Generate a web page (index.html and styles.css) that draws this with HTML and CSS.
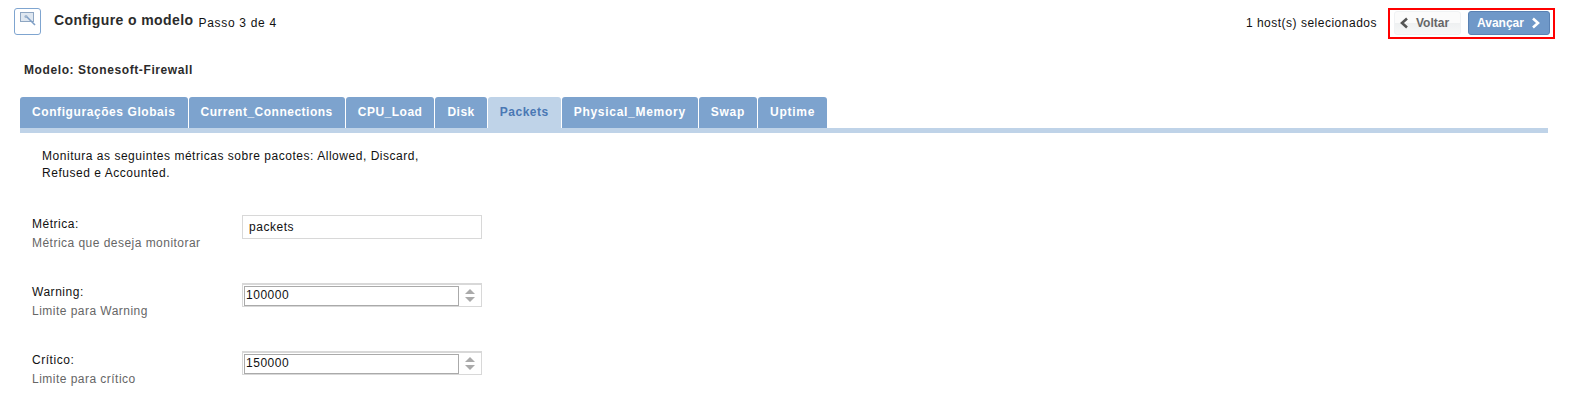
FILE: index.html
```html
<!DOCTYPE html>
<html lang="pt-BR">

<head>
  <meta charset="UTF-8">
  <meta name="viewport" content="width=device-width">
  <title>Configure o modelo</title>
  <link rel="stylesheet" href="styles.css">
</head>

<body>
  <div class="topbar">
    <div class="step-icon">
      <svg width="17" height="17" viewBox="0 0 17 17">
        <rect x="0.5" y="0.5" width="13" height="9" fill="#dfe7f0" stroke="#8ea6c2"></rect>
        <circle cx="6" cy="4.5" r="1.6" fill="#9db3cc"></circle>
        <path d="M7 5l8 8" stroke="#7f9fc6" stroke-width="1.6" fill="none"></path>
      </svg>
    </div>
    <h1 class="step-title">Configure o modelo</h1>
    <span class="step-count">Passo 3 de 4</span>
    <span class="hosts">1 host(s) selecionados</span>
    <div class="nav-box">
      <button class="btn btn-back">
        <svg width="10" height="12" viewBox="0 0 10 12"><path d="M8 1.5L3 6l5 4.5" fill="none" stroke="#555" stroke-width="2.6"></path></svg>
        Voltar
      </button>
      <button class="btn btn-next">
        Avançar
        <svg width="10" height="12" viewBox="0 0 10 12"><path d="M2 1.5L7 6l-5 4.5" fill="none" stroke="#fff" stroke-width="2.6"></path></svg>
      </button>
    </div>
  </div>

  <h2 class="model-name">Modelo: Stonesoft-Firewall</h2>

  <div class="tabs">
    <a class="tab">Configurações Globais</a>
    <a class="tab">Current_Connections</a>
    <a class="tab">CPU_Load</a>
    <a class="tab">Disk</a>
    <a class="tab active">Packets</a>
    <a class="tab">Physical_Memory</a>
    <a class="tab">Swap</a>
    <a class="tab">Uptime</a>
  </div>

  <p class="intro">Monitura as seguintes métricas sobre pacotes: Allowed, Discard, Refused e Accounted.</p>

  <div class="field">
    <div class="field-text">
      <label>Métrica:</label>
      <small>Métrica que deseja monitorar</small>
    </div>
    <input class="text-input" type="text" value="packets">
  </div>

  <div class="field">
    <div class="field-text">
      <label>Warning:</label>
      <small>Limite para Warning</small>
    </div>
    <div class="spinner">
      <input type="text" value="100000">
      <span class="arrows"><i class="up"></i><i class="down"></i></span>
    </div>
  </div>

  <div class="field">
    <div class="field-text">
      <label>Crítico:</label>
      <small>Limite para crítico</small>
    </div>
    <div class="spinner">
      <input type="text" value="150000">
      <span class="arrows"><i class="up"></i><i class="down"></i></span>
    </div>
  </div>
</body>

</html>
```

FILE: styles.css
```css
* {
  box-sizing: border-box;
  font-family: 'Liberation Sans', Arial, sans-serif;
}

html,
body {
  margin: 0;
  padding: 0;
  background-color: #fff;
  overflow: hidden;
}

body {
  height: 402px;
  font-size: 12px;
  letter-spacing: 0.53px;
  color: #111;
}

.topbar {
  display: flex;
  align-items: flex-start;
  height: 45px;
  padding: 8px 15px 0 14px;
}

.step-icon {
  width: 27px;
  height: 27px;
  border: 1px solid #7fa5d0;
  border-radius: 3px;
  padding: 3px 0 0 5px;
  margin-right: 13px;
}

.step-title {
  margin: 4px 5px 0 0;
  font-size: 14px;
  line-height: 16px;
  font-weight: bold;
  letter-spacing: 0.4px;
  color: #2b2b2b;
}

.step-count {
  margin-top: 7px;
  line-height: 16px;
  letter-spacing: 0.7px;
}

.hosts {
  margin: 7px 11px 0 auto;
  line-height: 16px;
  letter-spacing: 0.5px;
}

.nav-box {
  display: flex;
  gap: 7px;
  width: 167px;
  height: 31px;
  border: 2px solid #f00;
  padding: 1px 2px 0 4px;
}

.btn {
  display: flex;
  align-items: center;
  height: 24px;
  padding: 0 8px;
  border-radius: 3px;
  font-size: 12px;
  font-weight: bold;
  letter-spacing: 0;
}

.btn-back {
  width: 67px;
  gap: 7px;
  padding-left: 4px;
  border: 1px solid #f0f2f4;
  background: linear-gradient(#fbfbfb 50%, #eef0f1 50%, #f7f8f8);
  color: #666;
}

.btn-next {
  width: 82px;
  gap: 7px;
  border: 1px solid #5a82b4;
  background-color: #6f98c8;
  color: #fff;
}

.model-name {
  margin: 17px 0 0 24px;
  font-size: 12px;
  line-height: 16px;
  font-weight: bold;
  letter-spacing: 0.6px;
  color: #2b2b2b;
}

.tabs {
  display: flex;
  gap: 1px;
  height: 36px;
  margin: 19px 22px 0 20px;
  border-bottom: 5px solid #bfd3e8;
}

.tab {
  height: 31px;
  padding: 0 12px;
  border-radius: 3px 3px 0 0;
  background-color: #7da3ce;
  color: #fff;
  font-weight: bold;
  font-kerning: none;
  letter-spacing: 0.5px;
  line-height: 31px;
}

.tab:first-child {
  letter-spacing: 0.58px;
}

.tab:nth-last-child(-n+3) {
  letter-spacing: 0.72px;
}

.tab.active {
  background-color: #bfd3e8;
  color: #4a78b4;
}

.intro {
  width: 400px;
  margin: 15px 0 0 42px;
  line-height: 17px;
}

.field {
  display: flex;
  align-items: flex-start;
  height: 68px;
  padding-left: 32px;
}

.intro + .field {
  margin-top: 33px;
}

.field-text {
  width: 210px;
  padding-top: 1px;
}

.field-text label {
  display: block;
  line-height: 16px;
}

.field-text small {
  display: block;
  margin-top: 3px;
  font-size: 12px;
  line-height: 16px;
  letter-spacing: 0.47px;
  color: #666;
}

.text-input {
  width: 240px;
  height: 24px;
  padding: 0 6px;
  border: 1px solid #d8d8d8;
  font-size: 12px;
  letter-spacing: 0.53px;
  color: #111;
  outline: none;
}

.spinner {
  display: flex;
  align-items: center;
  width: 240px;
  height: 24px;
  padding-left: 1px;
  border: 1px solid #d8d8d8;
  border-top-width: 2px;
}

.spinner input {
  width: 215px;
  height: 20px;
  padding: 0 1px 1px;
  border: 1px solid #aaa;
  font-size: 12px;
  letter-spacing: 0.53px;
  color: #111;
  outline: none;
}

.arrows {
  display: flex;
  flex-direction: column;
  align-items: center;
  gap: 3px;
  margin-left: 6px;
}

.arrows i {
  display: block;
  width: 0;
  height: 0;
  border-left: 5px solid transparent;
  border-right: 5px solid transparent;
}

.arrows .up {
  border-bottom: 5px solid #aaa;
}

.arrows .down {
  border-top: 5px solid #aaa;
}
```
